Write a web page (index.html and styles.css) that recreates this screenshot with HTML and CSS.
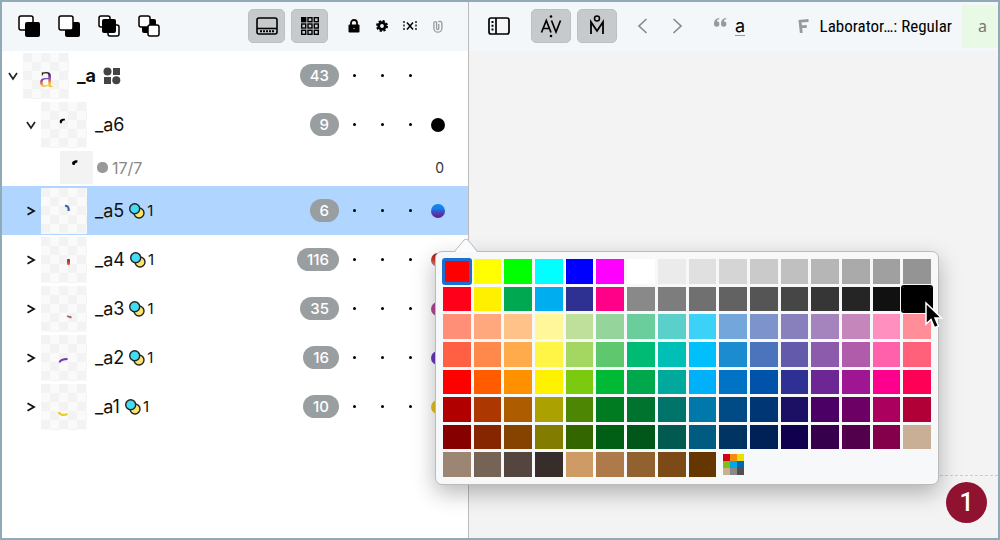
FILE: index.html
```html
<!DOCTYPE html>
<html lang="en">
<head>
<meta charset="utf-8">
<title>Layer editor</title>
<link rel="stylesheet" href="styles.css">
</head>
<body>
<svg class="defs" aria-hidden="true">
  <defs>
    <linearGradient id="ember" x1="0" y1="0" x2="0" y2="1"><stop offset="0" stop-color="#7a3023"/><stop offset="1" stop-color="#f0644a"/></linearGradient>
    <symbol id="down" viewBox="0 0 10 10"><path d="M1 2l4 6 4-6" fill="none" stroke="#222" stroke-width="1.700"/></symbol>
    <symbol id="right" viewBox="0 0 10 10"><path d="M1.500 1.200l6.500 3.800-6.500 3.800" fill="none" stroke="#111" stroke-width="1.800"/></symbol>
    <symbol id="blend" viewBox="0 0 16 16"><circle cx="10" cy="10" r="5" fill="#fbe36a" stroke="#222" stroke-width="1.400"/><circle cx="5.700" cy="5.700" r="5" fill="#43dcf5" stroke="#222" stroke-width="1.400"/></symbol>
  </defs>
</svg>
<div class="app">
  <section class="layers">
    <header class="toolbar">
      <div class="arrange">
        <button class="icon-button" aria-label="Union front"><svg width="22" height="22"><rect x="1" y="1" width="14" height="14" rx="2" fill="#fff" stroke="#000" stroke-width="1.500"/><rect x="7" y="7" width="15" height="15" rx="2"/></svg></button>
        <button class="icon-button" aria-label="Union back"><svg width="22" height="22"><rect x="7" y="7" width="15" height="15" rx="2"/><rect x="1" y="1" width="14" height="14" rx="2" fill="#fff" stroke="#000" stroke-width="1.500"/></svg></button>
        <button class="icon-button" aria-label="Intersect"><svg width="22" height="22"><rect x="1" y="1" width="11" height="11" rx="2" fill="#fff" stroke="#000" stroke-width="1.500"/><rect x="10" y="10" width="11" height="11" rx="2" fill="#fff" stroke="#000" stroke-width="1.500"/><rect x="4" y="4" width="14" height="14" rx="2"/></svg></button>
        <button class="icon-button" aria-label="Exclude"><svg width="22" height="22"><rect x="4" y="4" width="14" height="14" rx="2"/><rect x="1" y="1" width="11" height="11" rx="2" fill="#fff" stroke="#000" stroke-width="1.500"/><rect x="10" y="10" width="11" height="11" rx="2" fill="#fff" stroke="#000" stroke-width="1.500"/></svg></button>
      </div>
      <div class="toggles">
        <button class="toggle" aria-pressed="true" aria-label="Palette bar"><svg width="22" height="18" fill="none" stroke="#000" stroke-width="1.600"><rect x="1" y="1" width="20" height="16" rx="2"/><path d="M1 11.500h20"/><path d="M4 14.300h14" stroke-width="2" stroke-dasharray="2 1"/></svg></button>
        <button class="toggle" aria-pressed="true" aria-label="Grid view"><svg width="18" height="18" fill="none" stroke="#000" stroke-width="1.400"><rect x="0.700" y="0.700" width="4" height="4" fill="#000"/><rect x="7" y="0.700" width="4" height="4"/><rect x="13.300" y="0.700" width="4" height="4"/><rect x="0.700" y="7" width="4" height="4"/><rect x="7" y="7" width="4" height="4"/><rect x="13.300" y="7" width="4" height="4"/><rect x="0.700" y="13.300" width="4" height="4"/><rect x="7" y="13.300" width="4" height="4"/><rect x="13.300" y="13.300" width="4" height="4"/></svg></button>
      </div>
      <div class="columns">
        <span class="cell"><svg width="12" height="14" role="img" aria-label="Lock"><rect x="0.500" y="5.500" width="11" height="8" rx="1"/><path d="M3 6V4a3 3 0 0 1 6 0v2" fill="none" stroke="#000" stroke-width="1.800"/><circle cx="6" cy="9.500" r="0.700" fill="#bbb"/></svg></span>
        <span class="cell"><svg width="12" height="12" role="img" aria-label="Settings"><circle cx="6" cy="6" r="3.300" fill="none" stroke="#000" stroke-width="2.800"/><circle cx="6" cy="6" r="5" fill="none" stroke="#000" stroke-width="2" stroke-dasharray="2.200 1.727"/></svg></span>
        <span class="cell"><svg width="14" height="12" role="img" aria-label="Spacing" fill="none" stroke="#000"><path d="M1 1v10M13 1v10" stroke-width="1.300" stroke-dasharray="2 1.500"/><path d="M4 2.500l6 7M10 2.500l-6 7" stroke-width="1.500"/></svg></span>
        <span class="cell"><svg width="10" height="13" role="img" aria-label="Attachment" fill="none" stroke="#999" stroke-width="1.300"><path d="M5.800 4v4.500a1.100 1.100 0 0 1-2.200 0V2.700a1.400 1.400 0 0 0-2.700 0v5.500a4 4 0 0 0 8 0V3a2 2 0 0 0-3.500-1"/></svg></span>
      </div>
    </header>

    <div class="tree" role="tree">
      <div class="row" role="treeitem" aria-expanded="true">
        <button class="caret" aria-label="Collapse _a"><svg width="10" height="10"><use href="#down"/></svg></button>
        <span class="thumb"><span class="glyph">a</span></span>
        <span class="name root">_a <svg width="18" height="18" fill="#444"><circle cx="4.500" cy="4.500" r="4"/><rect x="10" y="1" width="7" height="7"/><rect x="1" y="10" width="7" height="7"/><circle cx="13.300" cy="13.300" r="4"/></svg></span>
        <span class="count">43</span>
        <span class="columns"><i class="cell dot"></i><i class="cell dot"></i><i class="cell dot"></i><i class="cell"></i></span>
      </div>
      <div class="row nested" role="treeitem" aria-expanded="true">
        <button class="caret" aria-label="Collapse _a6"><svg width="10" height="10"><use href="#down"/></svg></button>
        <span class="thumb"><svg width="46" height="46"><path d="M19.500 21.500c-2-3 0-5 4.500-4.800l-.3 1.800c-1.700 0-2.600.600-2.900 2.600z"/></svg></span>
        <span class="name">_a6</span>
        <span class="count">9</span>
        <span class="columns"><i class="cell dot"></i><i class="cell dot"></i><i class="cell dot"></i><i class="cell"><b class="fill black"></b></i></span>
      </div>
      <div class="row leaf" role="treeitem">
        <span class="thumb small"><svg width="33" height="33"><path d="M13 14c-2.300-2.500 0-5 4.500-4.800l-.3 2.700c-1.500-.2-2.200.3-2.200 1.800z"/></svg></span>
        <span class="nodes">17/7</span>
        <span class="value">0</span>
      </div>
      <div class="row nested selected" role="treeitem" aria-selected="true" aria-expanded="false">
        <button class="caret" aria-label="Expand _a5"><svg width="10" height="10"><use href="#right"/></svg></button>
        <span class="thumb"><svg width="46" height="46"><path d="M24 18c3-.5 4 1.500 3.500 5" fill="none" stroke="#3f66b5" stroke-width="2.200"/></svg></span>
        <span class="name">_a5 <svg width="16" height="16"><use href="#blend"/></svg> <small>1</small></span>
        <span class="count">6</span>
        <span class="columns"><i class="cell dot"></i><i class="cell dot"></i><i class="cell dot"></i><i class="cell"><b class="fill ocean"></b></i></span>
      </div>
      <div class="row nested" role="treeitem" aria-expanded="false">
        <button class="caret" aria-label="Expand _a4"><svg width="10" height="10"><use href="#right"/></svg></button>
        <span class="thumb"><svg width="46" height="46"><rect x="26" y="22" width="3" height="6" rx="1" fill="url(#ember)"/></svg></span>
        <span class="name">_a4 <svg width="16" height="16"><use href="#blend"/></svg> <small>1</small></span>
        <span class="count">116</span>
        <span class="columns"><i class="cell dot"></i><i class="cell dot"></i><i class="cell dot"></i><i class="cell"><b class="fill ember"></b></i></span>
      </div>
      <div class="row nested" role="treeitem" aria-expanded="false">
        <button class="caret" aria-label="Expand _a3"><svg width="10" height="10"><use href="#right"/></svg></button>
        <span class="thumb"><svg width="46" height="46"><path d="M26 30.500c1.500-.8 3 .8 4.500 1" fill="none" stroke="#a8605c" stroke-width="1.800"/></svg></span>
        <span class="name">_a3 <svg width="16" height="16"><use href="#blend"/></svg> <small>1</small></span>
        <span class="count">35</span>
        <span class="columns"><i class="cell dot"></i><i class="cell dot"></i><i class="cell dot"></i><i class="cell"><b class="fill rose"></b></i></span>
      </div>
      <div class="row nested" role="treeitem" aria-expanded="false">
        <button class="caret" aria-label="Expand _a2"><svg width="10" height="10"><use href="#right"/></svg></button>
        <span class="thumb"><svg width="46" height="46"><path d="M18.500 27.500c1-3 4-3.500 8-3.500" fill="none" stroke="#6b38b8" stroke-width="2"/></svg></span>
        <span class="name">_a2 <svg width="16" height="16"><use href="#blend"/></svg> <small>1</small></span>
        <span class="count">16</span>
        <span class="columns"><i class="cell dot"></i><i class="cell dot"></i><i class="cell dot"></i><i class="cell"><b class="fill violet"></b></i></span>
      </div>
      <div class="row nested" role="treeitem" aria-expanded="false">
        <button class="caret" aria-label="Expand _a1"><svg width="10" height="10"><use href="#right"/></svg></button>
        <span class="thumb"><svg width="46" height="46"><path d="M18 28c1 3.500 5 3.500 8.500 2" fill="none" stroke="#ecc924" stroke-width="2.200"/></svg></span>
        <span class="name">_a1 <svg width="16" height="16"><use href="#blend"/></svg> <small>1</small></span>
        <span class="count">10</span>
        <span class="columns"><i class="cell dot"></i><i class="cell dot"></i><i class="cell dot"></i><i class="cell"><b class="fill gold"></b></i></span>
      </div>
    </div>
  </section>

  <main class="editor">
    <header class="toolbar">
      <button class="icon-button" aria-label="Toggle sidebar"><svg width="22" height="18" fill="none" stroke="#000" stroke-width="1.700"><rect x="1" y="1" width="20" height="16" rx="2"/><path d="M8 1v16"/><path d="M4.500 4v11" stroke-width="2" stroke-dasharray="2 1.700"/></svg></button>
      <div class="modes">
        <button class="toggle wide" aria-pressed="true" aria-label="Kerning"><svg width="22" height="24" fill="none" stroke="#000" stroke-width="1.700"><path d="M1.500 18.500L6.300 6.500l4.700 12M3 14.500h6.500M11.500 6.500l4.500 11.500 4.500-11.500"/><circle cx="11" cy="2.500" r="1.300" fill="#000" stroke="none"/><circle cx="11" cy="22" r="1.300" fill="#000" stroke="none"/></svg></button>
        <button class="toggle wide" aria-pressed="true" aria-label="Anchors"><svg width="16" height="24" fill="none" stroke="#000" stroke-width="1.800"><path d="M2 20V8l6 9 6-9v12"/><circle cx="8" cy="4.500" r="2.500" stroke-width="1.500"/></svg></button>
      </div>
      <div class="history">
        <button class="icon-button" aria-label="Previous"><svg width="11" height="18" fill="none" stroke="#888" stroke-width="1.600"><path d="M9.500 2L2 9l7.500 7"/></svg></button>
        <button class="icon-button" aria-label="Next"><svg width="11" height="18" fill="none" stroke="#888" stroke-width="1.600"><path d="M1.500 2L9 9l-7.500 7"/></svg></button>
      </div>
      <div class="current">
        <svg width="13" height="16" fill="#999" role="img" aria-label="Unicode"><path d="M5 0C1.500.500 0 3 0 6a2.700 2.700 0 1 0 2.600-2.700C3 2 4 1.300 5.500 1z"/><path d="M12 0C8.500.500 7 3 7 6a2.700 2.700 0 1 0 2.600-2.700C10 2 11 1.300 12.500 1z"/></svg>
        <a class="glyph-link" href="#a">a</a>
      </div>
      <button class="font-picker"><svg width="11" height="14" fill="none" stroke="#999" stroke-width="2.800" aria-hidden="true"><path d="M3.300 14L2 2.200 10.500 1.500M2.800 7.800l6-.5"/></svg><span>Laborator…: Regular</span></button>
      <button class="preview">a</button>
    </header>
    <div class="canvas"></div>
  </main>

  <div class="palette" role="dialog" aria-label="Colour palette">
    <svg class="tip" width="22" height="14" aria-hidden="true"><path d="M0 14L9 2q2-2 4 0l9 12z" fill="#fafbfc"/><path d="M0 13L9 2q2-2 4 0l9 11" fill="none" stroke="#bbb"/></svg>
    <div class="swatches"></div>
    <svg class="cursor" width="20" height="30" aria-hidden="true"><path d="M2 2v21l5-4.500 3.500 8.200 4-1.700-3.500-8H17.500z" fill="#000" stroke="#fff" stroke-width="1.500"/></svg>
  </div>
  <div class="badge">1</div>
</div>
<script src="script.js"></script>
</body>
</html>
```
FILE: styles.css
```css
* { box-sizing: border-box; }
body {
  margin: 0;
  font-family: Inter, "Liberation Sans", sans-serif;
  font-size: 18px;
  color: #111;
}
button {
  margin: 0;
  padding: 0;
  border: 0;
  background: none;
  font: inherit;
  color: inherit;
}
svg { display: block; flex: none; }
.defs { position: absolute; width: 0; height: 0; }

.app {
  position: relative;
  display: grid;
  grid-template-columns: 467fr 529fr;
  min-height: 100vh;
  border: 2px solid #90aab8;
}
.toolbar {
  display: flex;
  align-items: center;
  height: 49px;
  padding-bottom: 1px;
  background: #f4f7fa;
}

/* Layer list */
.layers { background: #fff; border-right: 1px solid #bbb; }
.layers .toolbar { padding-left: 16px; padding-right: 16px; }
.arrange { display: flex; gap: 18px; }
.toggles { display: flex; gap: 6px; margin: 0 12px 0 auto; }
.icon-button { display: block; }
.toggle {
  display: grid;
  place-items: center;
  width: 37px;
  height: 34px;
  border: 1px solid #bcc0c3;
  border-radius: 5px;
  background: #c6cacd;
}
.toggle.wide { width: 40px; }
.columns {
  display: grid;
  grid-template-columns: repeat(4, 28px);
  align-items: center;
}
.cell { display: grid; place-items: center; }
.dot::before {
  content: "";
  width: 3px;
  height: 3px;
  border-radius: 50%;
  background: #000;
}
.fill { width: 14px; height: 14px; border-radius: 50%; }
.black { background: #000; }
.ocean { background: linear-gradient(#1482ec 30%, #3d4fc0 55%, #6c1590); }
.ember { background: linear-gradient(#b01515, #c83c30 50%, #c9a0a0); }
.rose { background: linear-gradient(#b840a8, #b05080); }
.violet { background: #6a35c0; }
.gold { background: #e6c020; }

.row {
  display: flex;
  align-items: center;
  height: 49px;
  padding: 0 16px 0 0;
}
.row.nested { padding-left: 18px; }
.row.leaf { height: 37px; padding-left: 58px; }
.row.selected { background: #b0d5ff; }
.caret { display: grid; place-items: center; width: 21px; height: 20px; }
.thumb {
  display: grid;
  place-items: center;
  width: 46px;
  height: 46px;
  overflow: hidden;
  background: repeating-conic-gradient(#fafafa 0 25%, #f3f3f3 0 50%) 0 0 / 18px 18px;
}
.thumb.small { width: 33px; height: 33px; background: #f3f3f3; }
.glyph {
  font: 32px/40px "Liberation Serif", serif;
  color: transparent;
  background: linear-gradient(165deg, #222 45%, #6b3fc4 55%, #e06a50 63%, #f6c13a 70%);
  background-clip: text;
  -webkit-background-clip: text;
}
.name { display: flex; align-items: center; gap: 5px; margin-left: 8px; }
.name.root { gap: 7px; font-weight: 700; }
.name small { margin-left: -3px; font-size: 15px; }
.nodes {
  display: flex;
  align-items: center;
  gap: 4px;
  margin-left: 4px;
  font-size: 16px;
  color: #888;
}
.nodes::before {
  content: "";
  width: 11px;
  height: 11px;
  border-radius: 5px;
  background: #999;
}
.value { margin: 0 8px 0 auto; font-size: 14px; color: #333; }
.count {
  margin: 0 1px 0 auto;
  padding: 0 10px;
  border-radius: 12px;
  background: #999ea1;
  color: #fff;
  font-size: 15px;
  font-weight: 500;
  line-height: 23px;
}

/* Editor */
.editor { display: flex; flex-direction: column; background: #f3f3f3; }
.editor .toolbar { padding-left: 19px; }
.modes { display: flex; gap: 6px; margin-left: 21px; }
.history { display: flex; gap: 24px; margin-left: 20px; }
.current { display: flex; align-items: center; gap: 8px; margin-left: 31px; }
.glyph-link {
  border-bottom: 1px solid #999;
  color: #000;
  line-height: 19px;
  text-decoration: none;
}
.font-picker {
  display: flex;
  align-items: center;
  gap: 11px;
  margin-left: auto;
  font: 17px/24px "Liberation Sans Narrow", "Roboto Condensed", Roboto, sans-serif;
  color: #000;
}
.preview {
  width: 36px;
  height: 43px;
  margin-left: 10px;
  background: #e8f9e5;
  padding-left: 5px;
  color: #777;
  font: 16px/20px "Noto Sans", sans-serif;
}
.canvas { flex: 1; margin-bottom: 62px; border-bottom: 1px dashed #ccc; }

/* Colour popover, floating over both panels */
.palette {
  position: absolute;
  left: 433px;
  top: 249px;
  width: 504px;
  padding: 7px;
  border: 1px solid #bbb;
  border-radius: 7px;
  background: #f6f8fa;
  box-shadow: 0 8px 22px rgba(0, 0, 0, 0.28);
}
.tip { position: absolute; left: 19px; top: -14px; }
.swatches {
  display: grid;
  grid-template-columns: repeat(16, 1fr);
  grid-template-rows: repeat(8, 1fr);
  gap: 3px;
  height: 218px;
}
.swatch { display: block; }
.swatch.active { outline: 3px solid #1b6fd3; outline-offset: -2px; border-radius: 2px; }
.swatch.hovered { outline: 2px solid #000; border-radius: 1px; }
.more {
  display: grid;
  grid-template-columns: repeat(3, 7px);
  grid-template-rows: repeat(3, 7px);
  place-content: center;
}
.cursor { position: absolute; right: -6px; top: 49px; }
.badge {
  position: absolute;
  right: 11px;
  bottom: 15px;
  width: 41px;
  height: 41px;
  border-radius: 50%;
  background: #8f1230;
  color: #fff;
  font: 500 25px/41px Roboto, "Liberation Sans", sans-serif;
  text-align: center;
}
```
FILE: script.js
```js
const rows = [
  "ff0000 ffff00 00ff00 00ffff 0000ff ff00ff ffffff ebebeb e0e0e0 d5d5d5 cacaca c0c0c0 b6b6b6 aaaaaa a0a0a0 949494",
  "ff001a fff000 00a851 00aeef 2e3191 ff0088 898989 7d7d7d 707070 626262 555555 464646 363636 252525 111111 000000",
  "ff8f77 ffa87e ffc389 fff799 bfe09b 95d59b 69cd9c 5bd0ca 3cd2f7 73a7db 7c93cb 8880bc a583bc c587bb ff8fbf ff8e99",
  "ff6043 ff894a ffab4b fff547 a3d762 5fc76e 00bb73 00bfb5 00bffa 1a8ccf 4b74bd 635aac 8d5bab b05caa ff62aa ff607a",
  "ff0000 ff5c00 ff9100 fff200 7cca10 00b935 00a84b 00a99c 00b0f9 0073c5 0053a9 2e3094 6d2794 9f1692 ff008e ff0057",
  "b00000 ad3700 ad5d00 aba100 4c8603 007b22 00732f 00746a 0078a9 004b85 003673 1c1064 4b0065 6d0064 ab005e b00037",
  "860000 852600 864300 827c00 346600 005f14 005719 005a50 005b80 003463 002157 10004d 36004d 53004c 85004a c9af95",
  "9c8572 756356 54463f 372d2a ce9b66 ae7a4a 916130 7b4a17 663600"
];
const grid = document.querySelector(".swatches");
rows.join(" ").split(" ").forEach((hex, index) => {
  const swatch = document.createElement("button");
  swatch.className = "swatch";
  if (index === 0) swatch.classList.add("active");
  if (index === 31) swatch.classList.add("hovered");
  swatch.style.background = "#" + hex;
  swatch.setAttribute("aria-label", "#" + hex);
  grid.append(swatch);
});
const more = document.createElement("button");
more.className = "more";
more.setAttribute("aria-label", "More colours");
"d0021b f78b0c e8e000 7fc010 00a8e8 0068b0 c8b090 888888 505050".split(" ").forEach(hex => {
  const tile = document.createElement("span");
  tile.style.background = "#" + hex;
  more.append(tile);
});
grid.append(more);
```
